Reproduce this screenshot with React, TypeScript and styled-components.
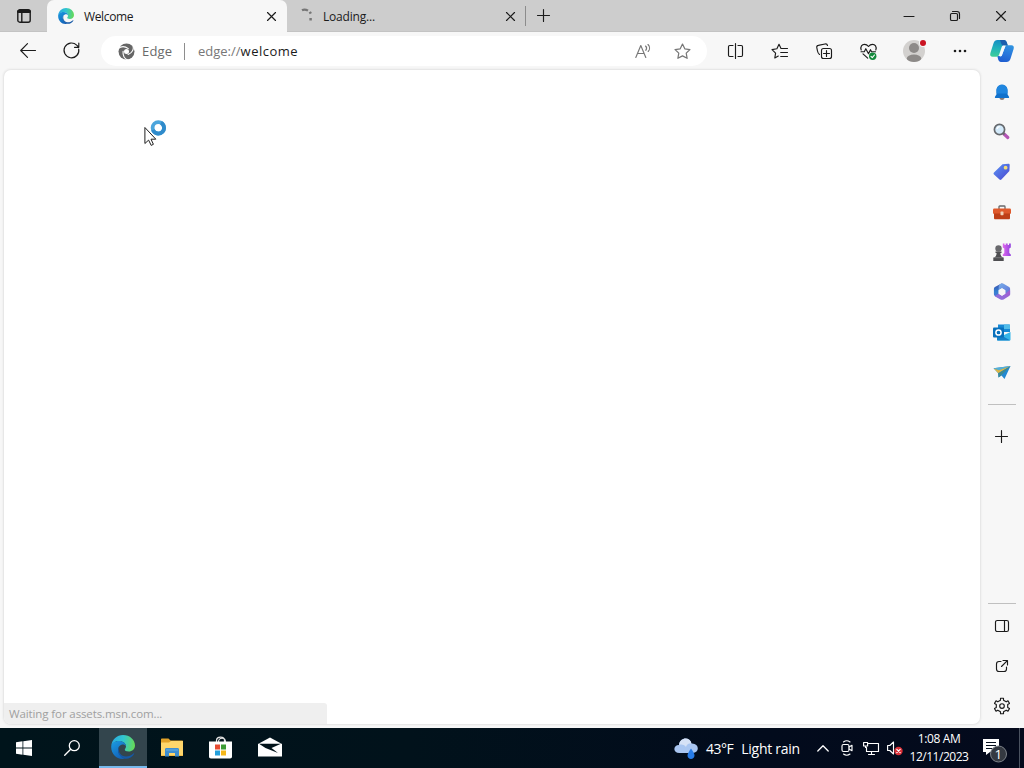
import React from "react";
import styled, { createGlobalStyle } from "styled-components";

const GlobalStyle = createGlobalStyle`
  * { box-sizing: border-box; }
  body { margin: 0; overflow: hidden; background: #f7f7f7; font-family: "Open Sans", "Noto Sans", sans-serif; font-size: 12px; color: #1b1b1b; }
  svg { display: block; flex: none; overflow: visible; }
`;

const Desktop = styled.div`
  width: 1024px;
  height: 768px;
  display: grid;
  grid-template-rows: 32px 38px 658px 40px;
`;

const Label = styled.span<{ $spacing?: number; $size?: number; $color?: string }>`
  white-space: pre;
  font-size: ${p => p.$size ?? 12}px;
  letter-spacing: ${p => p.$spacing ?? 0}px;
  color: ${p => p.$color ?? "inherit"};
`;

const TitleBar = styled.header`
  display: flex;
  background: #cdcdcd;
  border-bottom: 1px solid #c3c3c3;
`;

const Cell = styled.div<{ $w: number; $h?: number }>`
  flex: none;
  display: flex;
  align-items: center;
  justify-content: center;
  width: ${p => p.$w}px;
  height: ${p => (p.$h ? p.$h + "px" : "100%")};
`;

const Tab = styled.div<{ $active?: boolean; $w: number }>`
  flex: none;
  display: flex;
  align-items: center;
  width: ${p => p.$w}px;
  height: 32px;
  padding: 0 10px 0 11px;
  gap: 10px;
  border-radius: 7px 7px 0 0;
  background: ${p => (p.$active ? "#f7f7f7" : "transparent")};
`;

const TabTitle = styled(Label)`
  flex: 1;
`;

const TabDivider = styled.div`
  width: 1px;
  height: 20px;
  margin-top: 6px;
  background: #8c8c8c;
`;

const Spacer = styled.div`
  flex: 1;
`;

const Toolbar = styled.nav`
  display: flex;
  align-items: center;
  padding-left: 6px;
  background: #f7f7f7;
`;

const AddressBar = styled.div`
  flex: none;
  display: flex;
  align-items: center;
  width: 606px;
  height: 30px;
  margin: 0 6px 0 7px;
  padding: 0 16px 0 17px;
  border-radius: 15px;
  background: #fff;
  font-size: 13px;
`;

const Site = styled.div`
  display: flex;
  align-items: center;
  gap: 7px;
  width: 67px;
  height: 17px;
  margin-right: 13px;
  border-right: 1px solid #8e8e8e;
  color: #6a6a6a;
`;

const AddressActions = styled.div`
  margin-left: auto;
  display: flex;
  align-items: center;
  gap: 23px;
`;

const Main = styled.div`
  display: grid;
  grid-template-columns: 980px 44px;
  background: #f7f7f7;
`;

const Page = styled.main`
  position: relative;
  margin: 0 0 4px 4px;
  border-radius: 7px;
  background: #fff;
  box-shadow: 0 0 2px 1px #e2e2e2;
`;

const StatusBubble = styled.div`
  position: absolute;
  left: 0;
  bottom: 0;
  width: 323px;
  height: 21px;
  display: flex;
  align-items: center;
  padding-left: 5px;
  border-radius: 0 3px 0 7px;
  background: #efefef;
`;

const Cursor = styled.div`
  position: absolute;
  left: 140px;
  top: 49px;
`;

const Sidebar = styled.aside`
  display: flex;
  flex-direction: column;
  align-items: center;
  padding-top: 2px;
`;

const Rule = styled.div`
  width: 28px;
  height: 1px;
  background: #c0c0c0;
`;

const AddCell = styled(Cell)`
  margin-top: 12px;
`;

const RuleTop = styled(Rule)`
  margin-top: 12px;
`;

const BottomTools = styled.div`
  margin-top: auto;
  margin-bottom: 2px;
  display: flex;
  flex-direction: column;
  align-items: center;
`;

const FirstTool = styled(Cell)`
  margin-top: 2px;
`;

const Taskbar = styled.footer`
  display: flex;
  align-items: center;
  background: linear-gradient(90deg, #00141b 0%, #01121b 40%, #020b1c 75%, #040a1c 100%);
  color: #fff;
`;

const TaskApps = styled.div`
  display: flex;
  gap: 1px;
  height: 100%;
  margin-left: 3px;
`;

const TaskApp = styled(Cell)<{ $active?: boolean }>`
  background: ${p => (p.$active ? "#33454d" : "transparent")};
  border-bottom: 2px solid ${p => (p.$active ? "#76b9ed" : "transparent")};
`;

const Weather = styled.div`
  display: flex;
  align-items: center;
  gap: 8px;
  width: 137px;
`;

const Clock = styled.div`
  width: 64px;
  display: flex;
  flex-direction: column;
  align-items: center;
  line-height: 18px;
`;

const ShowDesktop = styled.div`
  width: 5px;
  height: 100%;
  border-left: 1px solid #4a5260;
`;

type IconProps = { w?: number; h?: number; vb?: string; color?: string; sw?: number; children: React.ReactNode };
const Line = ({ w = 18, h = w, vb, color = "#1b1b1b", sw = 1.15, children }: IconProps) => (
  <svg width={w} height={h} viewBox={vb ?? `0 0 ${w} ${h}`} fill="none" stroke={color} strokeWidth={sw} strokeLinecap="round" strokeLinejoin="round">
    {children}
  </svg>
);

const EdgeLogo = ({ size, id }: { size: number; id: string }) => (
  <svg width={size} height={size} viewBox="0 0 24 24">
    <defs>
      <linearGradient id={id + "a"} x1="0" y1="0.3" x2="1" y2="0.4">
        <stop offset="0" stopColor="#2aa9e0" />
        <stop offset=".5" stopColor="#32c6cf" />
        <stop offset="1" stopColor="#65d957" />
      </linearGradient>
      <linearGradient id={id + "b"} x1="0" y1="0" x2=".6" y2="1">
        <stop offset="0" stopColor="#1b9de2" />
        <stop offset="1" stopColor="#1261b8" />
      </linearGradient>
    </defs>
    <path d="M0.4 10.6C1 4.3 6 0 12 0c7 0 12 5 12 10.5 0 3.8-3 6-6.2 6-3 0-4-1.1-4-1.8 0-.8 1.2-1.2 1.2-3.4C15 8.500 12 6 8.200 6 4.500 6 1.500 8 .4 10.600Z" fill={`url(#${id}a)`} />
    <path d="M.2 12C.2 8 4 6 8 6c4 0 7 2.500 7 5.300-1-1.500-2.800-2.200-4.500-1.600-3 1-4.200 4.500-2.800 8 1 2.700 3.300 4.800 6.300 5.900C7 25.500.2 20 .2 12Z" fill={`url(#${id}b)`} />
    <path d="M9 11c-2.400 3.500-.8 8 2.600 9.700 3.800 1.700 8 .3 10.800-2.300.6-.5 1 .1.700.6-2 3-5.200 5-9.100 4.700C8 22 4.500 15.500 9 11Z" fill="#1558a6" />
  </svg>
);

const EdgeMono = () => (
  <svg width="17" height="17" viewBox="0 0 17 17">
    <circle cx="8.500" cy="8.500" r="8" fill="#666" />
    <g fill="none" stroke="#fff" strokeLinecap="round">
      {[0, 120, 240].map(a => (
        <path key={a} transform={`rotate(${a} 8.500 8.500)`} d="M.2 5.500C3 3.300 7 3.200 10.300 5.600" strokeWidth="1.150" />
      ))}
    </g>
    <circle cx="8.500" cy="8.500" r="2.500" fill="#fff" />
  </svg>
);

const Cross = ({ s = 9 }: { s?: number }) => (
  <Line w={s}><path d={`M.5.500 ${s - 0.5} ${s - 0.5}M${s - 0.5}.500.500 ${s - 0.5}`} /></Line>
);

const Plus = () => <Line w={14}><path d="M6.500.500v12M.500 6.500h12" /></Line>;

const STAR = "M8 1l2.150 4.450 4.850.7-3.500 3.400.85 4.850L8 12.100 3.650 14.400l.85-4.850L1 6.150l4.850-.7Z";

const Bell = () => (
  <svg width="16" height="18" viewBox="0 -0.7 16 18">
    <path d="M5.500 14h5c0 3-5 3-5 0" fill="#8a7b75" />
    <path d="M8 1C4.500 1 2.500 3.500 2.500 6.500v4L1 13c-.3.800 0 1.300.8 1.300h12.400c.8 0 1.100-.5.8-1.300l-1.500-2.500v-4C13.500 3.500 11.500 1 8 1Z" fill="#1272cc" />
    <path d="M8 1C4.500 1 2.500 3.500 2.500 6.500v3.300h11V6.500C13.500 3.500 11.500 1 8 1Z" fill="#2086df" />
  </svg>
);

const Magnifier = () => (
  <svg width="18" height="18" viewBox="0 0 18 18">
    <path d="m11 11 3.800 3.500" stroke="#b455b6" strokeWidth="3.200" strokeLinecap="round" />
    <path d="m9.500 9.500 2 2" stroke="#6b6b70" strokeWidth="2" />
    <circle cx="6.500" cy="6.500" r="5.100" fill="#d3eafa" stroke="#66696d" strokeWidth="1.700" />
    <path d="M4 6c.3-1.500 1.300-2.300 2.700-2.400" stroke="#fff" strokeWidth="1.200" fill="none" />
  </svg>
);

const Tag = () => (
  <svg width="18" height="18" viewBox="0 0 18 18">
    <defs><linearGradient id="tag" x1="0" y1="0" x2="1" y2="1"><stop stopColor="#5b96f5" /><stop offset="1" stopColor="#4a45cf" /></linearGradient></defs>
    <path d="M9.500 1.200 15.500.8c.7 0 1.200.5 1.200 1.200l-.3 6-8 8.500c-.6.6-1.300.6-1.900 0L1 11.500c-.6-.6-.6-1.300 0-1.900Z" fill="url(#tag)" />
    <circle cx="12.600" cy="4.700" r="1.900" fill="#f5dd78" />
  </svg>
);

const Toolbox = () => (
  <svg width="18" height="15" viewBox="0 0 18 15">
    <path d="M6 4V1.800c0-.5.3-.8.800-.8h4.400c.5 0 .8.300.8.800V4" fill="none" stroke="#68686b" strokeWidth="1.300" />
    <rect y="3.500" width="18" height="5.500" rx="1.200" fill="#df592b" />
    <path d="M1 8.500h16V13c0 .8-.4 1.300-1.200 1.300H2.200C1.400 14.300 1 13.800 1 13Z" fill="#be3f17" />
    <rect x="7.500" y="6.500" width="3" height="3.700" rx=".6" fill="#f0d0b5" />
  </svg>
);

const Chess = () => (
  <svg width="18" height="18" viewBox="0 -0.5 18 18">
    <defs><linearGradient id="rook" x1="0" x2="1"><stop stopColor="#df69ed" /><stop offset="1" stopColor="#9342df" /></linearGradient></defs>
    <path d="M9.800 0h1.700v1.600h1.200V0h2v1.600H16V0h1.800v4l-1.500 1V9.500l1.500 1.600v1.500h-8v-1.500l1.500-1.600V5l-1.500-1Z" fill="url(#rook)" />
    <circle cx="5.500" cy="5" r="3.200" fill="#68686c" />
    <path d="M2.500 8h6v1.400H7.400c.1 2 .6 3.600 2.300 4.600h1v3.500H.3V14h1.200c1.500-1 2-2.500 2.100-4.600H2.500Z" fill="#4e4e51" />
    <path d="M1.500 14.200h8" stroke="#78787b" />
  </svg>
);

const M365 = () => (
  <svg width="18" height="18" viewBox="0 0 18 18">
    <defs>
      <linearGradient id="mA" x1="0" y1="0" x2="0" y2="1"><stop stopColor="#3b4fae" /><stop offset=".5" stopColor="#347fd0" /><stop offset="1" stopColor="#5d78dd" /></linearGradient>
      <linearGradient id="mB" x1="0" y1="0" x2="1" y2="1"><stop stopColor="#76aeea" /><stop offset="1" stopColor="#5f6fd6" /></linearGradient>
      <linearGradient id="mC" x1="0" y1="1" x2="1" y2="0"><stop stopColor="#8a75de" /><stop offset="1" stopColor="#a45bd0" /></linearGradient>
    </defs>
    <path d="M8.500.6 11 1 5.600 7v4L9 16.500 1.900 13.100C1.200 12.700.9 12 .9 11.200V5.800C.9 5 1.200 4.400 1.900 4Z" fill="url(#mA)" />
    <path d="M7 1c1.300-.7 2.700-.7 4 0l5.100 3c.7.400 1 1 1 1.800v6l-4.800-1V7.200L9 5.200 5.700 7.100V3Z" fill="url(#mB)" />
    <path d="M17.100 8v3.300c0 .8-.3 1.400-1 1.800L11 16.300c-1.300.7-2.700.7-4 0l-5.300-3.100 4-2.400L9 12.800l3.300-2 4.700-4Z" fill="url(#mC)" />
    <path d="m9 5.200 3.300 2v3.600L9 12.800l-3.300-2V7.200Z" fill="#f7f7f7" />
  </svg>
);

const Outlook = () => (
  <svg width="18" height="17" viewBox="0 0 18 17">
    <path d="M5 .5h11c.6 0 1 .4 1 1V8H5Z" fill="#1688d5" />
    <path d="M11 .5h5c.6 0 1 .4 1 1V5h-6Z" fill="#51bce9" />
    <path d="m4 8 7 3 6.500-3v7.500c0 .6-.4 1-1 1H5c-.6 0-1-.4-1-1Z" fill="#35b5e9" />
    <path d="m4 9 13 7.300-1 .2H5c-.6 0-1-.4-1-1Z" fill="#1381c9" />
    <rect y="3.500" width="11" height="10" rx="1" fill="#0870bc" />
    <circle cx="5.500" cy="8.500" r="2.600" fill="none" stroke="#fff" strokeWidth="1.500" />
  </svg>
);

const Plane = () => (
  <svg width="18" height="15" viewBox="0 0 18 15">
    <path d="M.5 3.200 17.500 1 11.500 14 8.500 10.500 5.500 12.500 5 8Z" fill="#2389d3" />
    <path d="M.5 3.200 17.500 1 6 5.500Z" fill="#54b0d8" />
    <path d="M.8 3.500 4.800 7.700 5.800 8 17.500 1 6 5.300Z" fill="#dfb744" />
    <path d="M17.500 1 5.300 8.300 5.500 12.500l2.800-2.300Z" fill="#3e8a91" />
  </svg>
);

const Copilot = () => (
  <svg width="24" height="22" viewBox="0 0 24 22">
    <defs>
      <linearGradient id="cpA" x1=".3" y1="0" x2=".2" y2="1"><stop stopColor="#168ec4" /><stop offset=".5" stopColor="#22b3b9" /><stop offset="1" stopColor="#3fcf98" /></linearGradient>
      <linearGradient id="cpB" x1=".7" y1="0" x2=".4" y2="1"><stop stopColor="#2f93e0" /><stop offset=".5" stopColor="#2878dc" /><stop offset="1" stopColor="#1f5ed0" /></linearGradient>
    </defs>
    <path d="M16.500 22H11c-1.500 0-2.300-1-2.800-2.400L7.300 16h3.200c1.500 0 1.400-.8 1.900-2.300L15 7.200c.5-1.300 1.200-1.900 2.500-1.900h3.800c2.200 0 3 1.700 2.300 3.800l-3.200 10c-.7 1.900-1.900 2.900-3.900 2.900Z" fill="url(#cpB)" />
    <path d="M7.500 0H14c1.500 0 2.300 1 2.800 2.400l.9 2.900h-3.200c-1.500 0-2.400.5-2.900 2l-2.500 7.500c-.5 1.300-1.300 1.900-2.600 1.900H2.700C.5 16.700-.3 15 .4 12.900l3.200-10C4.300 1 5.500 0 7.500 0Z" fill="url(#cpA)" />
    <path d="M10 0h4c1.500 0 2.300 1 2.800 2.400l1 3h-4c-1.500 0-2.300-.9-2.600-2Z" fill="#1b5fae" />
    <path d="M13 5.800h2.400L12 15c-.4 1-1 1.500-2.300 1.500Z" fill="#f3fafc" />
  </svg>
);

const gearPath = (() => {
  const pts: string[] = [];
  for (let i = 0; i < 6; i++) {
    const a = (i * Math.PI) / 3;
    [[-0.26, 5.9], [-0.19, 7.9], [0.19, 7.9], [0.26, 5.9]].forEach(([d, r]) => {
      pts.push(`${(9 + Math.sin(a + d) * r).toFixed(2)} ${(9 - Math.cos(a + d) * r).toFixed(2)}`);
    });
  }
  return "M" + pts.join("L") + "Z";
})();

const sideApps = [Bell, Magnifier, Tag, Toolbox, Chess, M365, Outlook, Plane];

export default function App() {
  return (
    <>
      <GlobalStyle />
      <Desktop>
        <TitleBar>
          <Cell $w={47}>
            <Line w={14} sw={1.4}>
              <rect x=".8" y=".8" width="12.400" height="12.400" rx="2" />
              <path d="M1.500 2.500h11" strokeWidth="3" /><path d="M4.800 4v9" />
            </Line>
          </Cell>
          <Tab $active $w={240}>
            <EdgeLogo size={16} id="tab" />
            <TabTitle $spacing={-0.35}>Welcome</TabTitle>
            <Cell $w={11}><Cross /></Cell>
          </Tab>
          <Tab $w={238}>
            <svg width="15" height="18" viewBox="1 0 15 18" fill="none" stroke="#767676" strokeWidth="2.200">
              <path d="M5 3.200c1.800-1 4-.8 6 .5" /><path d="m12.800 4.800 1 1.800" strokeWidth="2.500" /><path d="M13.600 11v2.500" strokeWidth="2.500" />
            </svg>
            <TabTitle $spacing={-0.2}>Loading...</TabTitle>
            <Cell $w={9}><Cross /></Cell>
          </Tab>
          <TabDivider />
          <Cell $w={36}><Plus /></Cell>
          <Spacer />
          <Cell $w={46}><Line w={10}><path d="M0 5.500h10" /></Line></Cell>
          <Cell $w={46}>
            <Line w={10}><rect x=".5" y="2.500" width="7" height="7" rx="1.300" /><path d="M2.500.500H7A2.500 2.500 0 0 1 9.500 3v4.500" /></Line>
          </Cell>
          <Cell $w={46}><Cross s={10} /></Cell>
        </TitleBar>

        <Toolbar>
          <Cell $w={44}><Line w={16}><path d="M15.500 7.500H.7M7.500.700.7 7.500l6.800 6.800" /></Line></Cell>
          <Cell $w={44}><Line w={18}><path d="M15.700 7A7.400 7.400 0 1 1 13.700 3.200L15.600 5M15.800 1v4.300h-4.300" /></Line></Cell>
          <AddressBar>
            <Site>
              <EdgeMono />
              <Label $size={13} $spacing={0.2}>Edge</Label>
            </Site>
            <Label $size={13} $color="#777">edge://</Label>
            <Label $size={13} $spacing={0.5}>welcome</Label>
            <AddressActions>
              <Line w={16} color="#777"><path d="m.8 14.500 5-12 5 12M2.500 10.500h6.700M10.500 3c1.200 1 1.200 3 .3 4.300M13 1.500c2 2 2 5 .2 7" /></Line>
              <Line w={17} vb="0 0 16 16" color="#777"><path d={STAR} /></Line>
            </AddressActions>
          </AddressBar>
          <Cell $w={44}><Line w={16}><path d="M6 2.500H2.700c-.7 0-1.200.5-1.200 1.200v8.600c0 .7.5 1.200 1.200 1.200H6M8.500.500v15M11 2.500h3.300c.7 0 1.200.5 1.200 1.200v8.600c0 .7-.5 1.200-1.200 1.200H11" /></Line></Cell>
          <Cell $w={45}><Line w={17}><path d="M7.300 13 3.800 15l.8-4.800L1 6.600l4.900-.8L8 1.300l2 4.200M10.500 5.500h6M9.700 9.500h6.800M9.700 13.500h6.800" /></Line></Cell>
          <Cell $w={44}><Line w={17}><rect x="5.500" y="5.500" width="10" height="10" rx="2" /><path d="M10.500 7.500v6M7.500 10.500h6M3.500 11.500C2 10.500 1.800 9.500 1.500 8L.8 4.700C.6 3.500 1.200 2.600 2.300 2.400L9 1c1.300-.3 2.200.3 2.500 1.500" /></Line></Cell>
          <Cell $w={44}>
            <Line w={17}>
              <path d="M1.200 7C0 3.500 2 1.300 4.500 1.300c1.700 0 3 .9 4 2.200 1-1.300 2.300-2.200 4-2.200C15 1.300 17 3.500 15.800 7M1 8.700h3.300l1.500-3 2.700 5 2-4 1 2h4M3 10.800l4.700 4.400" />
              <circle cx="12.700" cy="13.300" r="3.700" fill="#138a3c" stroke="none" /><path d="m11 13.300 1.300 1.300 2.200-2.600" stroke="#fff" />
            </Line>
          </Cell>
          <Cell $w={48}>
            <svg width="22" height="22" viewBox="0 0 22 22">
              <defs><clipPath id="avatar"><circle cx="11" cy="11" r="11" /></clipPath></defs>
              <circle cx="11" cy="11" r="11" fill="#d3d1cf" />
              <g clipPath="url(#avatar)" fill="#8d8a88"><circle cx="11" cy="8" r="5" /><ellipse cx="11" cy="18.800" rx="7.300" ry="4.200" /></g>
              <circle cx="20" cy="3" r="4" fill="#f7f7f7" /><circle cx="20" cy="3" r="3" fill="#ca1422" />
            </svg>
          </Cell>
          <Cell $w={44}>
            <svg width="14" height="4" viewBox="0 0 14 4" fill="#1b1b1b"><circle cx="2" cy="2" r="1.300" /><circle cx="7" cy="2" r="1.300" /><circle cx="12" cy="2" r="1.300" /></svg>
          </Cell>
          <Cell $w={40}><Copilot /></Cell>
        </Toolbar>

        <Main>
          <Page>
            <Cursor>
              <svg width="24" height="28" viewBox="0 0 24 28">
                <path d="M.9 8.500v16l3.700-3.400 2.600 5.300 2.200-1.100-2.400-5.100h4.800Z" fill="#fff" stroke="#202020" strokeWidth="1" />
                <circle cx="14.300" cy="8.800" r="5.700" fill="#fff" stroke="#4ba5dc" strokeWidth="3.800" />
                <path d="M9 10.800A5.700 5.700 0 1 0 17 3.800" fill="none" stroke="#2f8bcb" strokeWidth="3.800" />
              </svg>
            </Cursor>
            <StatusBubble><Label $size={11.5} $spacing={-0.11} $color="#a0a0a0">Waiting for assets.msn.com...</Label></StatusBubble>
          </Page>
          <Sidebar>
            {sideApps.map((AppIcon, i) => <Cell $w={44} $h={40} key={i}><AppIcon /></Cell>)}
            <RuleTop />
            <AddCell $w={44} $h={40}><Plus /></AddCell>
            <BottomTools>
              <Rule />
              <FirstTool $w={44} $h={40}><Line w={14}><rect x=".5" y="1.500" width="13" height="11" rx="1.800" /><path d="M9.500 1.500v11" /></Line></FirstTool>
              <Cell $w={44} $h={40}><Line w={14}><path d="M6 2.500H4C2.600 2.500 1.500 3.600 1.500 5v5c0 1.400 1.100 2.500 2.500 2.500h5c1.400 0 2.500-1.100 2.500-2.500V8M8 1.500h4.500V6M12.300 1.700 6.500 7.500" /></Line></Cell>
              <Cell $w={44} $h={40}><Line w={18}><path d={gearPath} /><circle cx="9" cy="9" r="2.300" /></Line></Cell>
            </BottomTools>
          </Sidebar>
        </Main>

        <Taskbar>
          <Cell $w={48}>
            <svg width="16" height="16" viewBox="0 0 16 16" fill="#fff"><path d="M0 2.200 6.500 1.300v6.300H0ZM7.300 1.200 16 0v7.600H7.300ZM0 8.400h6.500v6.300L0 13.800ZM7.300 8.400H16V16l-8.700-1.200Z" /></svg>
          </Cell>
          <Cell $w={48}><Line w={16} color="#fff" sw={1.3}><circle cx="10.300" cy="5.700" r="5" /><path d="M6.700 9.300.7 15.300" /></Line></Cell>
          <TaskApps>
            <TaskApp $w={48} $active><EdgeLogo size={24} id="task" /></TaskApp>
            <TaskApp $w={48}>
              <svg width="22" height="19" viewBox="0 0 22 19">
                <path d="M0 1.500C0 .8.500.500 1 .500h6.500L9.500 2.500H21c.6 0 1 .3 1 1V18H0Z" fill="#e2a229" /><path d="M0 4.500h8L10 3h12v14.500H0Z" fill="#ffd66b" />
                <path d="M4 18.500v-7c0-1 .6-1.500 1.500-1.500h11c.9 0 1.500.5 1.500 1.500v7h-4V15H8v3.500Z" fill="#3e8ed0" /><path d="M5 12h12" stroke="#67aee1" />
              </svg>
            </TaskApp>
            <TaskApp $w={48}>
              <svg width="24" height="23" viewBox="0 0 24 23">
                <path d="M7.500 6V4.500C7.500 0 15.500 0 15.500 4.500V6M9.500 6c0-5 7-5 7 0" fill="none" stroke="#e5e5e5" strokeWidth="1.200" />
                <path d="M0 5.500h23v15c0 1.300-.7 2-2 2H2c-1.300 0-2-.7-2-2Z" fill="#fff" />
                <path d="M6 8.500h5v5H6Z" fill="#e74c32" /><path d="M12 8.500h5v5h-5Z" fill="#3c9c35" /><path d="M6 14.500h5v5H6Z" fill="#239fdb" /><path d="M12 14.500h5v5h-5Z" fill="#f5b719" />
              </svg>
            </TaskApp>
            <TaskApp $w={48}>
              <svg width="24" height="20" viewBox="0 0 24 20"><path d="M0 7 12 .500 24 7v12.500H0Z" fill="#fff" /><path d="M1 6.700h22L13.500 11 20 16 7.500 11Z" fill="#02131a" /></svg>
            </TaskApp>
          </TaskApps>
          <Spacer />
          <Weather>
            <svg width="24" height="22" viewBox="0 -1 24 22">
              <path d="M5.500 15C-1.500 15-1 7 5 7 6-1 16-1.500 17.500 5.500 25.500 5 26 15 18.500 15Z" fill="#a9c6f1" /><path d="M5 7C6-1 16-1.500 17.500 5.500c-4-.5-5 2-5.500 3.500C10 6.500 7 6 5 7Z" fill="#d6e2f6" />
              <path d="M17 10.500c2 3 3.500 5 3.500 7 0 4.500-7 4.500-7 0 0-2 1.500-4 3.500-7Z" fill="#277ce8" />
            </svg>
            <Label $size={14} $spacing={-0.5}>43°F</Label>
            <Label $size={14} $spacing={-0.26}>Light rain</Label>
          </Weather>
          <Cell $w={24}><Line w={12} h={7} color="#fff" sw={1.3}><path d="m.8 6 5.200-5.200L11.200 6" /></Line></Cell>
          <Cell $w={24}><Line w={14} h={16} color="#fff"><rect x="2" y="4.500" width="7" height="7" rx="1.500" /><path d="m9 7 3-1.700v5.400L9 9M3.500 2c2-1.500 4.500-1.500 6.500 0M3.500 14c2 1.500 4.500 1.500 6.500 0" /></Line></Cell>
          <Cell $w={24}><Line w={16} h={15} color="#fff"><path d="M5.500 2.500h10v8H3.500V6.500M8.500 10.500v3M5.500 13.500h6M.6 1.500h4v3.500h-4ZM2.500 5v1.500h1" /></Line></Cell>
          <Cell $w={24}>
            <Line w={16} h={15} color="#fff"><path d="M.6 4.500h2.200L6.500 1v12L2.800 9.500H.6Z" /><circle cx="11.500" cy="10" r="4.200" fill="#db3038" stroke="none" /><path d="m9.800 8.300 3.400 3.400M13.200 8.300l-3.400 3.400" /></Line>
          </Cell>
          <Clock><Label $spacing={-0.36}>1:08 AM</Label><Label $spacing={-0.48}>12/11/2023</Label></Clock>
          <Cell $w={48}>
            <svg width="26" height="26" viewBox="0 0 26 26">
              <path d="M1 4h16v13H8l-4 3v-3H1Z" fill="#fff" /><path d="M4 7.500h10M4 10.500h10M4 13.500h6" stroke="#07111f" strokeWidth="1.200" />
              <circle cx="16.500" cy="19" r="8" fill="#343941" stroke="#7d838a" />
              <text x="16.300" y="24" textAnchor="middle" fill="#fff" fontSize="13.5" fontFamily="Open Sans">1</text>
            </svg>
          </Cell>
          <ShowDesktop />
        </Taskbar>
      </Desktop>
    </>
  );
}
